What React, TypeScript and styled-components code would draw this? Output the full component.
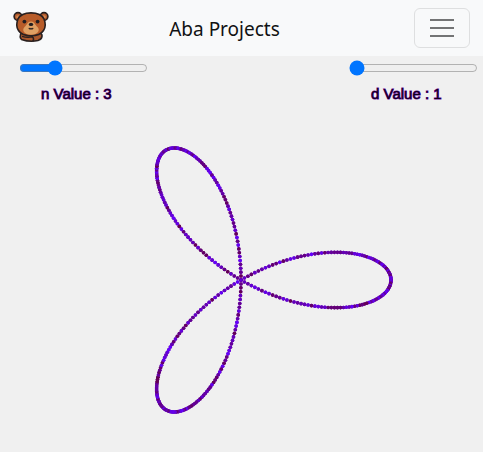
import React, { useId, useState } from "react";
import styled, { createGlobalStyle } from "styled-components";

const GlobalStyle = createGlobalStyle`
  *, *::before, *::after { box-sizing: border-box; }
  body {
    margin: 0;
    background: #f0f0f0;
    color: #212529;
    font-family: "Noto Sans", "Open Sans", sans-serif;
  }
`;

const Navbar = styled.nav`
  display: flex;
  align-items: center;
  justify-content: space-between;
  height: 56px;
  padding: 0 13px;
  background: #f8f9fa;
`;

const HomeLink = styled.a`
  display: flex;
  width: 36px;
  height: 36px;
`;

const Title = styled.h1`
  margin: 2px 0 0;
  padding-right: 14px;
  font-size: 19px;
  line-height: 30px;
  font-weight: 400;
  color: #101112;
`;

const Toggler = styled.button`
  display: flex;
  align-items: center;
  justify-content: center;
  width: 56px;
  height: 40px;
  padding: 0;
  border: 1px solid #dedfe0;
  border-radius: 6px;
  background: transparent;
  color: #737475;
  cursor: pointer;
`;

const Controls = styled.section`
  display: flex;
  justify-content: space-between;
  padding: 4px 5px 0 17px;
`;

const Control = styled.div`
  display: flex;
  flex-direction: column;
  width: 131px;
`;

const Slider = styled.input`
  width: 129px;
  height: 16px;
  margin: 0 2px;
  accent-color: #0075ff;
`;

const ValueLabel = styled.label`
  margin-top: 9px;
  padding-left: 24px;
  font: 15px/18px "Liberation Sans", Arial, sans-serif;
  color: #10001c;
  -webkit-text-stroke: 1px #640096;
  paint-order: stroke fill;
`;

const Stage = styled.main`
  display: flex;
  justify-content: center;
  padding-top: 25px;
`;

const Plot = styled.svg`
  display: block;
  width: 305px;
  max-width: 100%;
  height: auto;
`;

function Bear() {
  return (
    <svg width="36" height="36" viewBox="0 0 36 36" role="img" aria-label="Bear">
      <g stroke="#29201f" strokeWidth="1.6" strokeLinejoin="round">
        <path d="M8.5 22C7 25 7 28 8.5 29.5Q17 32.5 25 30.5Q29.5 29 29 25L26 21Z" fill="#a9572c" />
        <circle cx="5" cy="6.5" r="3.9" fill="#b55b2b" />
        <circle cx="31" cy="6.5" r="3.9" fill="#b55b2b" />
        <path d="M18 2.9C11 2.9 7 5 5 9C3.4 13 3 17 5.5 20.5C8 24.5 13 25.8 18 25.8S28 24.5 30.5 20.5C33 17 32.6 13 31 9C29 5 25 2.9 18 2.9Z" fill="#b85c29" />
      </g>
      <path d="M3 7.6Q3 4.8 6 5.2L4.6 8Z" fill="#d48b54" />
      <path d="M33 7.6Q33 4.8 30 5.2L31.4 8Z" fill="#d48b54" />
      <path d="M18 11.5C14.5 11.5 14 15 11.5 17C8.5 20 11 24.8 18 24.8S27.5 20 24.5 17C22 15 21.5 11.5 18 11.5Z" fill="#dfa063" />
      <circle cx="11.4" cy="11.6" r="1.9" fill="#211d20" />
      <circle cx="24.6" cy="11.6" r="1.9" fill="#211d20" />
      <ellipse cx="18" cy="14.4" rx="2.2" ry="1.6" fill="#211d20" />
      <path d="M16 17.8q.5 1.9 2 .7q1.5 1.2 2-.7" fill="none" stroke="#29201f" strokeWidth="1.2" />
      <path d="M9 26.3Q14 27.8 19.5 26.8Q21.5 29 19.8 31.2" fill="none" stroke="#29201f" strokeWidth="1.4" />
    </svg>
  );
}

const RADIUS = 150;
const STEPS = 720;

function dotColor(i: number) {
  const wave = Math.sin(i * 12.9898) * 43758.5453;
  const t = wave - Math.floor(wave);
  return `rgb(100, 0, ${Math.round(80 + 175 * t)})`;
}

function Rose({ n, d }: { n: number; d: number }) {
  const dots = Array.from({ length: STEPS * d }, (_, i) => {
    const angle = (i * 2 * Math.PI) / STEPS;
    const r = RADIUS * Math.cos((n / d) * angle);
    return { x: r * Math.cos(angle), y: r * Math.sin(angle) };
  });
  return (
    <Plot viewBox="-152 -152 305 305" role="img" aria-label="Rose curve">
      {dots.map((p, i) => (
        <circle key={i} cx={p.x} cy={p.y} r="1.8" fill={dotColor(i)} />
      ))}
    </Plot>
  );
}

type FactorProps = { name: string; value: number; onChange: (value: number) => void };

function Factor({ name, value, onChange }: FactorProps) {
  const id = useId();
  return (
    <Control>
      <Slider
        id={id}
        type="range"
        min={1}
        max={9}
        value={value}
        onChange={(e) => onChange(Number(e.target.value))}
      />
      <ValueLabel htmlFor={id}>{`${name} Value : ${value}`}</ValueLabel>
    </Control>
  );
}

export default function App() {
  const [n, setN] = useState(3);
  const [d, setD] = useState(1);
  return (
    <>
      <GlobalStyle />
      <Navbar>
        <HomeLink href="#" aria-label="Home">
          <Bear />
        </HomeLink>
        <Title>Aba Projects</Title>
        <Toggler type="button" aria-label="Toggle navigation">
          <svg width="30" height="30" viewBox="0 0 30 30" fill="none" aria-hidden="true">
            <path d="M3 7h24M3 15h24M3 23h24" stroke="currentColor" strokeWidth="2" />
          </svg>
        </Toggler>
      </Navbar>
      <Controls>
        <Factor name="n" value={n} onChange={setN} />
        <Factor name="d" value={d} onChange={setD} />
      </Controls>
      <Stage>
        <Rose n={n} d={d} />
      </Stage>
    </>
  );
}
